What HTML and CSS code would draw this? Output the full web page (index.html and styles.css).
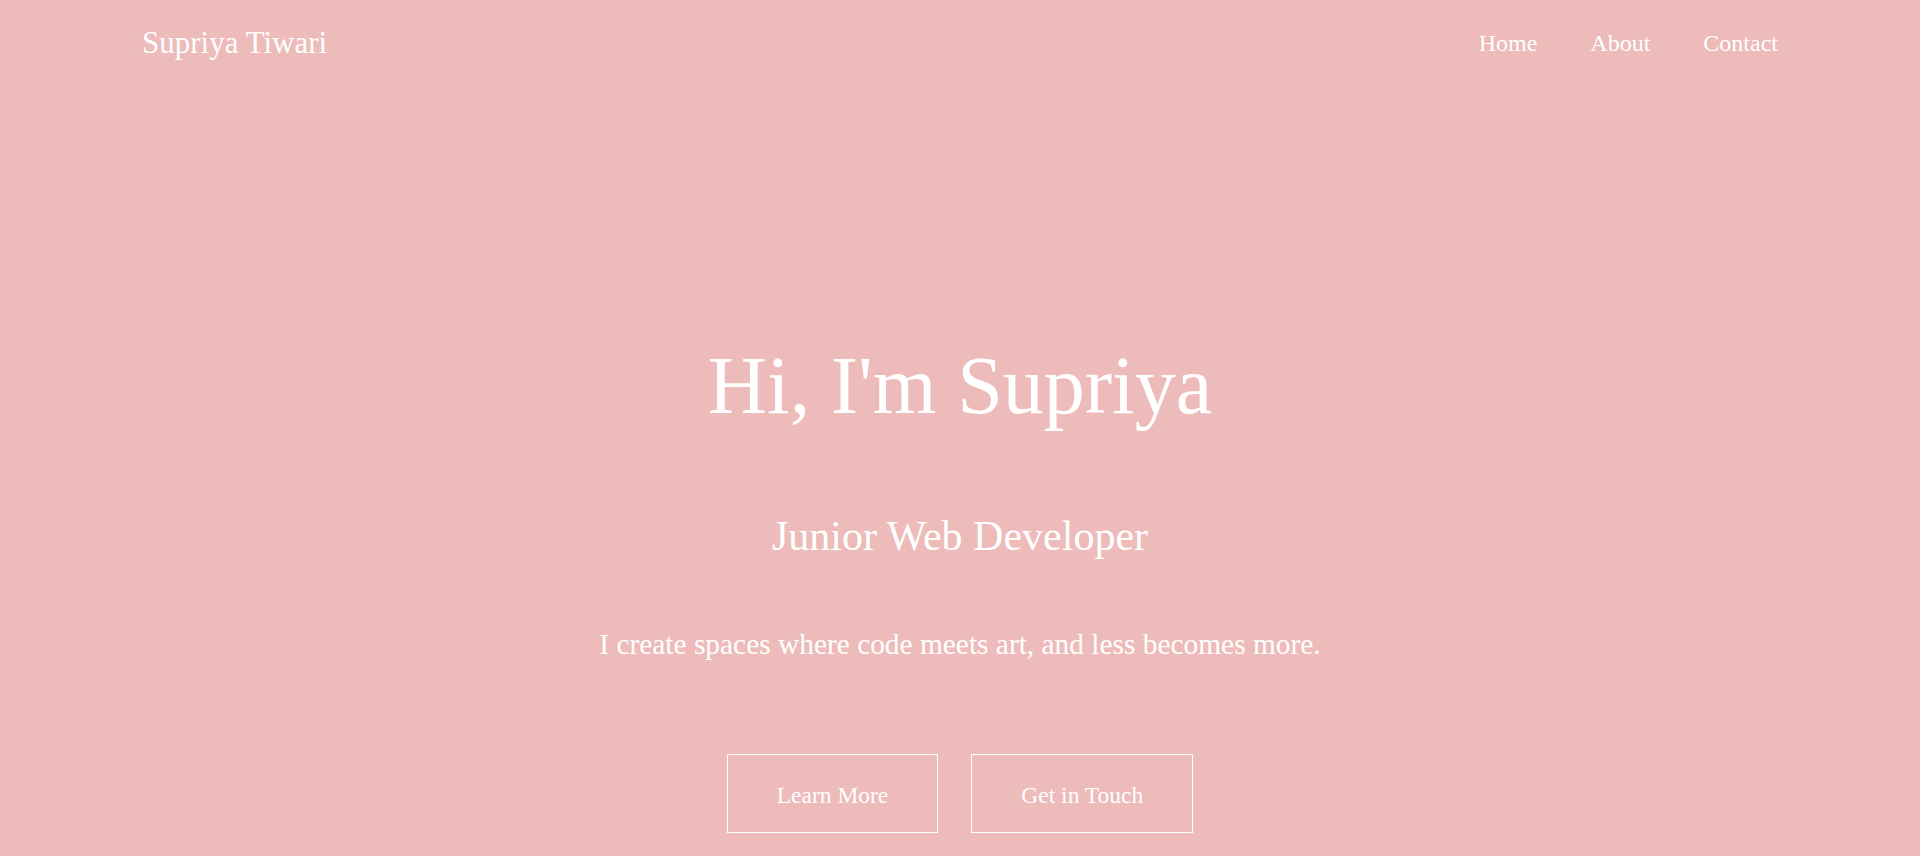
FILE: index.html
```html
<!DOCTYPE html>
<html lang="en">
<head>
<meta charset="utf-8">
<title>Supriya Tiwari</title>
<link rel="stylesheet" href="styles.css">
</head>
<body>
<header class="site-header">
  <a class="logo" href="#">Supriya Tiwari</a>
  <nav class="nav">
    <a href="#">Home</a>
    <a href="#">About</a>
    <a href="#">Contact</a>
  </nav>
</header>
<main class="hero">
  <h1 class="hero-title">Hi, I'm Supriya</h1>
  <h2 class="hero-subtitle">Junior Web Developer</h2>
  <p class="hero-text">I create spaces where code meets art, and less becomes more.</p>
  <div class="hero-actions">
    <a class="btn" href="#">Learn More</a>
    <a class="btn" href="#">Get in Touch</a>
  </div>
</main>
</body>
</html>
```

FILE: styles.css
```css
* { box-sizing: border-box; }

html, body {
  margin: 0;
  padding: 0;
}

body {
  background: #ecbbba;
  color: #ffffff;
  font-family: "Liberation Serif", "Times New Roman", serif;
  height: 856px;
  overflow: hidden;
}

a {
  color: #ffffff;
  text-decoration: none;
}

.site-header {
  display: flex;
  justify-content: space-between;
  align-items: center;
  padding: 27px 142px 0;
}

.logo {
  font-size: 31px;
  line-height: 1;
}

.nav {
  display: flex;
  gap: 53px;
}

.nav a {
  font-size: 24px;
  line-height: 1;
}

.hero {
  display: flex;
  flex-direction: column;
  align-items: center;
  text-align: center;
  padding-top: 287px;
}

.hero-title {
  margin: 0;
  font-size: 82px;
  font-weight: 400;
  line-height: 1;
}

.hero-subtitle {
  margin: 88px 0 0;
  font-size: 42px;
  font-weight: 400;
  line-height: 1;
}

.hero-text {
  margin: 73px 0 0;
  font-size: 29.4px;
  line-height: 1;
}

.hero-actions {
  display: flex;
  gap: 33px;
  margin-top: 95px;
}

.btn {
  display: block;
  border: 1px solid #ffffff;
  padding: 29px 49px 24px;
  font-size: 23.5px;
  line-height: 1;
}
```
